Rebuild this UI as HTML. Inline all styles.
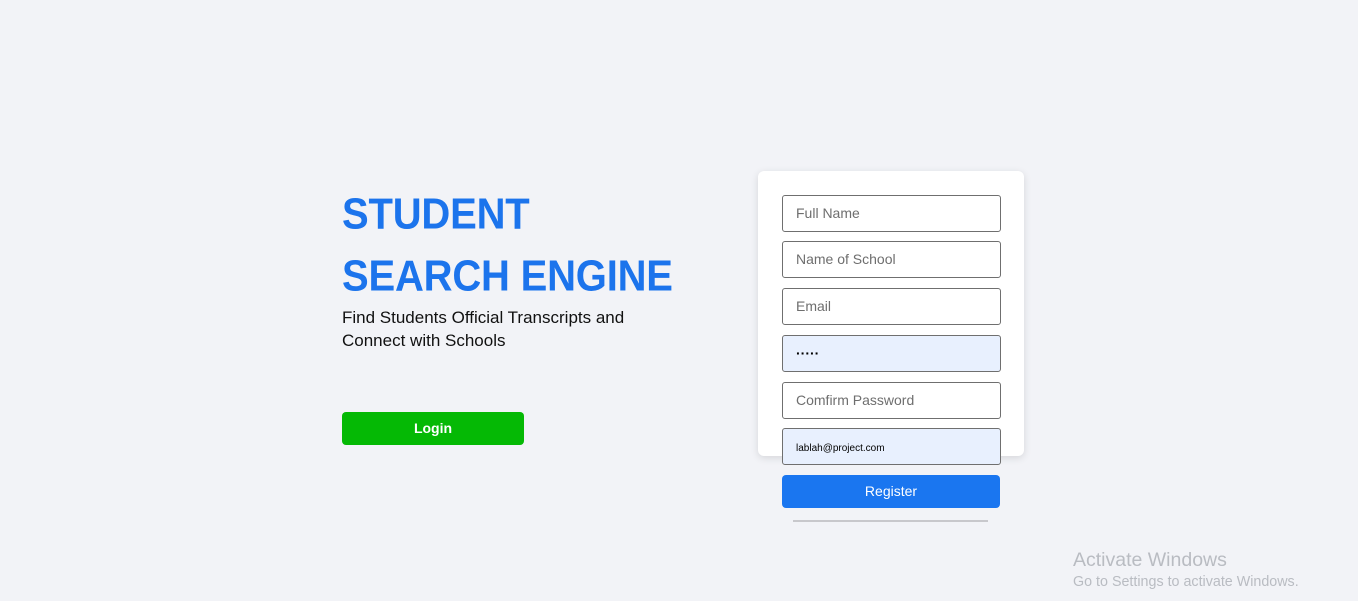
<!DOCTYPE html>
<html><head><meta charset="utf-8"><style>
body{margin:0;width:1358px;height:601px;background:#f2f3f7;position:relative;overflow:hidden;font-family:"Liberation Sans",Arial,sans-serif}
.t{position:absolute;left:342px;color:#1c74ec;font-weight:bold;font-size:40px;line-height:40px;white-space:nowrap;transform:scaleY(1.1);transform-origin:left top;letter-spacing:-0.2px}
.sub{position:absolute;left:342px;top:306px;font-size:17px;line-height:23px;color:#111}
.login{position:absolute;left:342px;top:412px;width:182px;height:33px;background:#05b905;border-radius:4px;color:#fff;font-size:14px;font-weight:bold;text-align:center;line-height:33px}
.card{position:absolute;left:758px;top:171px;width:266px;height:285px;background:#fff;border-radius:6px;box-shadow:0 2px 8px rgba(0,0,0,.12)}
.in{position:absolute;left:782px;border:1px solid #6f6f6f;border-radius:3px;background:#fff;color:#6e6e6e;font-size:14px;line-height:35px;padding-left:13px;box-sizing:border-box;width:219px;height:37px}
.f{background:#e8f0fe;color:#000}
.reg{position:absolute;left:782px;top:475px;width:218px;height:33px;background:#1a76f0;border-radius:4px;color:#fff;font-size:14px;text-align:center;line-height:33px}
.line{position:absolute;left:793px;top:520px;width:195px;height:2px;background:#c8c8cc}
.aw{position:absolute;left:1073px;top:549px;color:#b9bcc2;font-size:19.5px}
.aw2{position:absolute;left:1073px;top:574px;color:#b9bcc2;font-size:14.3px}
</style></head><body>
<div class="t" style="top:192px">STUDENT</div>
<div class="t" style="top:254px">SEARCH ENGINE</div>
<div class="sub">Find Students Official Transcripts and<br>Connect with Schools</div>
<div class="login">Login</div>
<div class="card"></div>
<div class="in" style="top:195px">Full Name</div>
<div class="in" style="top:241px">Name of School</div>
<div class="in" style="top:288px">Email</div>
<div class="in f" style="top:335px;font-weight:bold;font-size:14px">·····</div>
<div class="in" style="top:382px">Comfirm Password</div>
<div class="in f" style="top:428px;font-size:10px;line-height:40px">lablah@project.com</div>
<div class="reg">Register</div>
<div class="line"></div>
<div class="aw">Activate Windows</div>
<div class="aw2">Go to Settings to activate Windows.</div>
</body></html>
